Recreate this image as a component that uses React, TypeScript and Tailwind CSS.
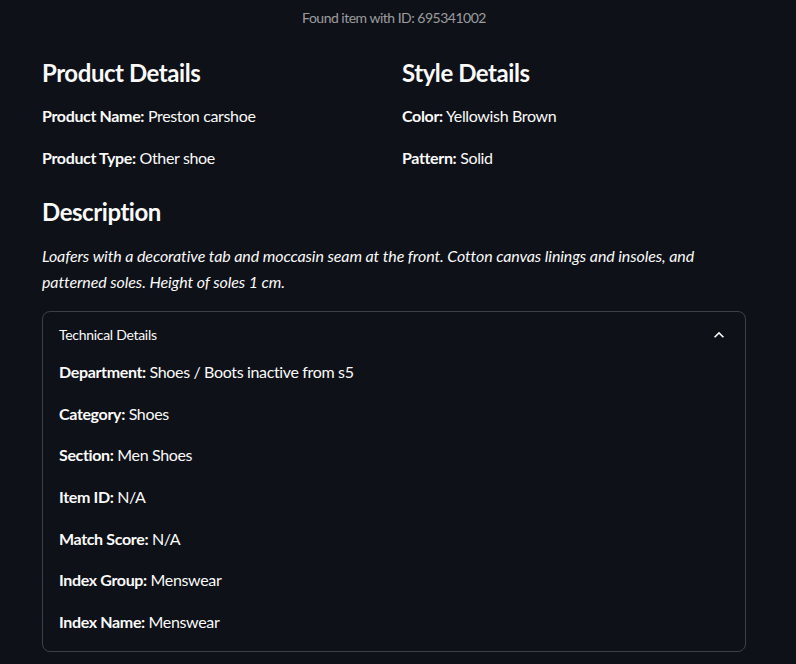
import React from "react";

const Row = ({ label, value }: { label: string; value: string }) => (
  <p className="text-[16px] leading-[25.6px] tracking-[-0.35px]">
    <span className="font-bold">{label}:</span> {value}
  </p>
);

const Chevron = () => (
  <svg width="20" height="20" viewBox="0 0 24 24" fill="#fafafa" aria-hidden>
    <path d="M12 8l-6 6 1.41 1.41L12 10.83l4.59 4.58L18 14z" />
  </svg>
);

export default function App() {
  return (
    <div
      className="min-h-[664px] w-full bg-[#0e1117] text-[#fafafa]"
      style={{ fontFamily: "Lato, 'Noto Sans', sans-serif" }}
    >
      <div className="pl-[42px] pr-[50px] pt-[7px] pb-[13px]">
        <p className="text-center text-[14px] leading-[22px] tracking-[-0.5px] text-[rgba(250,250,250,0.6)]">
          Found item with ID: 695341002
        </p>

        <div className="mt-[29px] grid grid-cols-2 gap-4">
          <div className="flex flex-col">
            <h3 className="text-[24px] font-bold leading-[29px] tracking-[-0.45px]">Product Details</h3>
            <div className="mt-[16px] flex flex-col gap-4">
              <Row label="Product Name" value="Preston carshoe" />
              <Row label="Product Type" value="Other shoe" />
            </div>
          </div>
          <div className="flex flex-col">
            <h3 className="text-[24px] font-bold leading-[29px] tracking-[-0.45px]">Style Details</h3>
            <div className="mt-[16px] flex flex-col gap-4">
              <Row label="Color" value="Yellowish Brown" />
              <Row label="Pattern" value="Solid" />
            </div>
          </div>
        </div>

        <h3 className="mt-[27px] text-[24px] font-bold leading-[29px] tracking-[-0.45px]">Description</h3>
        <p className="mt-[17px] text-[16px] italic leading-[26px] tracking-[-0.1px]">
          Loafers with a decorative tab and moccasin seam at the front. Cotton canvas linings and insoles, and
          patterned soles. Height of soles 1 cm.
        </p>

        <div className="mt-[16px] rounded-[8px] border border-[rgba(250,250,250,0.2)]">
          <div className="flex items-center justify-between pl-4 pr-4 pt-[12px] pb-[12px]">
            <span className="text-[14px] leading-[22px] tracking-[-0.3px]">Technical Details</span>
            <Chevron />
          </div>
          <div className="flex flex-col gap-4 px-4 pb-[17px] pt-[1px]">
            <Row label="Department" value="Shoes / Boots inactive from s5" />
            <Row label="Category" value="Shoes" />
            <Row label="Section" value="Men Shoes" />
            <Row label="Item ID" value="N/A" />
            <Row label="Match Score" value="N/A" />
            <Row label="Index Group" value="Menswear" />
            <Row label="Index Name" value="Menswear" />
          </div>
        </div>
      </div>
    </div>
  );
}
